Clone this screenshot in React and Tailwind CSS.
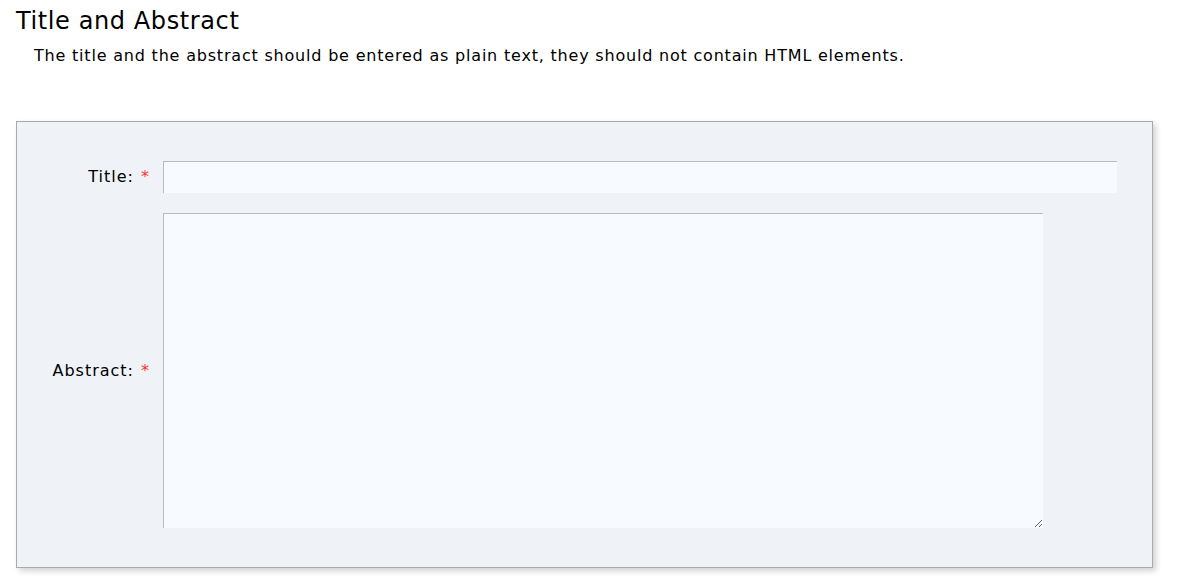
export default function App() {
  return (
    <div className="min-h-screen bg-white text-black font-['DejaVu_Sans',Verdana,sans-serif]">
      <div className="pl-4 pt-[6px]">
        <h1 className="text-[24px] leading-[30px] tracking-[0.6px]">Title and Abstract</h1>
        <p className="pl-[18px] pt-[10px] text-[16px] leading-[20px] tracking-[0.8px]">
          The title and the abstract should be entered as plain text, they should not contain HTML elements.
        </p>
      </div>

      <div className="ml-4 mt-[55px] w-[1137px] border border-[#aaaaaa] bg-[#eff2f6] pt-[39px] pb-[39px] pr-[35px] shadow-[3px_3px_6px_rgba(0,0,0,0.18)]">
        <div className="flex items-center">
          <label className="flex w-[146px] shrink-0 items-center justify-end pr-[13px] text-[16px] tracking-[1px]">
            Title:<span className="ml-[7px] text-[#ff3333]">*</span>
          </label>
          <input
            type="text"
            className="h-[32px] flex-1 border-t border-l border-[#bbbbbb] bg-[#f7faff] px-2 text-[16px] outline-none"
          />
        </div>

        <div className="mt-[20px] flex items-center">
          <label className="flex w-[146px] shrink-0 items-center justify-end pr-[13px] text-[16px] tracking-[1px]">
            Abstract:<span className="ml-[7px] text-[#ff3333]">*</span>
          </label>
          <textarea className="h-[315px] w-[880px] border-t border-l border-[#bbbbbb] bg-[#f7faff] px-2 text-[16px] outline-none" />
        </div>
      </div>
    </div>
  );
}
